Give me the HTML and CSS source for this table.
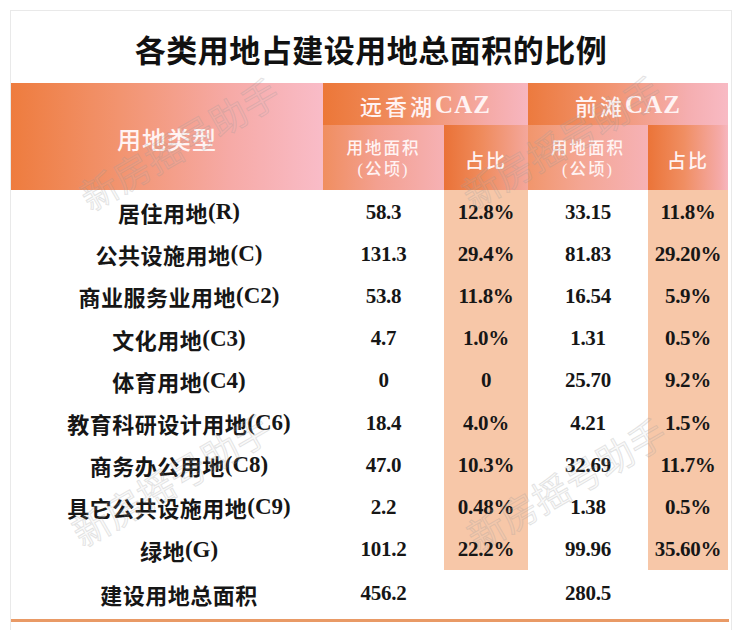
FILE: index.html
```html
<!DOCTYPE html>
<html lang="zh">
<head>
<meta charset="utf-8">
<title>各类用地占建设用地总面积的比例</title>
<link rel="stylesheet" href="styles.css">
</head>
<body>
<div class="sheet">
  <h1 class="title">各类用地占建设用地总面积的比例</h1>
  <div class="grid">
    <div class="hd hd-type">用地类型</div>
    <div class="hd hd-group g1">远香湖<span class="lat">CAZ</span></div>
    <div class="hd hd-group g2">前滩<span class="lat">CAZ</span></div>
    <div class="hd hd-area a1">用地面积<br>(公顷)</div>
    <div class="hd hd-pct p1">占比</div>
    <div class="hd hd-area a2">用地面积<br>(公顷)</div>
    <div class="hd hd-pct p2">占比</div>

    <div class="lab">居住用地<span class="lat">(R)</span></div><div class="num">58.3</div><div class="num pk">12.8%</div><div class="num">33.15</div><div class="num pk">11.8%</div>
    <div class="lab">公共设施用地<span class="lat">(C)</span></div><div class="num">131.3</div><div class="num pk">29.4%</div><div class="num">81.83</div><div class="num pk">29.20%</div>
    <div class="lab">商业服务业用地<span class="lat">(C2)</span></div><div class="num">53.8</div><div class="num pk">11.8%</div><div class="num">16.54</div><div class="num pk">5.9%</div>
    <div class="lab">文化用地<span class="lat">(C3)</span></div><div class="num">4.7</div><div class="num pk">1.0%</div><div class="num">1.31</div><div class="num pk">0.5%</div>
    <div class="lab">体育用地<span class="lat">(C4)</span></div><div class="num">0</div><div class="num pk">0</div><div class="num">25.70</div><div class="num pk">9.2%</div>
    <div class="lab">教育科研设计用地<span class="lat">(C6)</span></div><div class="num">18.4</div><div class="num pk">4.0%</div><div class="num">4.21</div><div class="num pk">1.5%</div>
    <div class="lab">商务办公用地<span class="lat">(C8)</span></div><div class="num">47.0</div><div class="num pk">10.3%</div><div class="num">32.69</div><div class="num pk">11.7%</div>
    <div class="lab">具它公共设施用地<span class="lat">(C9)</span></div><div class="num">2.2</div><div class="num pk">0.48%</div><div class="num">1.38</div><div class="num pk">0.5%</div>
    <div class="lab">绿地<span class="lat">(G)</span></div><div class="num">101.2</div><div class="num pk">22.2%</div><div class="num">99.96</div><div class="num pk">35.60%</div>
    <div class="lab total">建设用地总面积</div><div class="num total">456.2</div><div class="num total"></div><div class="num total">280.5</div><div class="num total"></div>
  </div>
  <div class="rule"></div>

  <span class="wm wm1">新房摇号助手</span>
  <span class="wm wm2">新房摇号助手</span>
  <span class="wm wm3">新房摇号助手</span>
  <span class="wm wm4">新房摇号助手</span>
</div>
</body>
</html>
```
FILE: styles.css
```css
html, body {
  margin: 0;
  padding: 0;
  background: #ffffff;
}

body {
  font-family: "Liberation Serif", "Noto Sans CJK SC", serif;
  color: #1a1a1a;
}

.sheet {
  position: relative;
  margin: 10px 0 0 10px;
  width: 720px;
  height: 640px;
  border-top: 1px solid #e9e9e9;
  border-left: 1px solid #e9e9e9;
  border-right: 1px solid #e9e9e9;
  overflow: hidden;
}

.title {
  margin: 0;
  height: 72px;
  display: flex;
  align-items: center;
  justify-content: center;
  font-family: "Noto Sans CJK SC", sans-serif;
  font-weight: 700;
  font-size: 31px;
  letter-spacing: 0.5px;
  color: #111;
  padding-top: 2px;
  box-sizing: border-box;
}

.grid {
  display: grid;
  grid-template-columns: 312px 121px 84px 120px 80px;
  grid-template-rows: 42px 65px repeat(9, 42.2px) 46px;
  width: 717px;
}

.hd {
  display: flex;
  align-items: center;
  justify-content: center;
  text-align: center;
  color: #fff3f3;
  font-family: "Liberation Serif", "Noto Sans CJK SC", serif;
  font-weight: 500;
}

.hd-type {
  grid-row: 1 / 3;
  grid-column: 1;
  font-size: 24px;
  letter-spacing: 1px;
  padding-top: 4px;
  background: linear-gradient(to right, #ee7c3e 0%, #f29470 35%, #f6aaa6 70%, #f9bcc8 100%);
}

.hd-group {
  font-size: 22px;
  letter-spacing: 3px;
  padding-top: 2px;
}

.hd-group .lat {
  font-size: 25px;
  font-weight: 700;
  letter-spacing: 1px;
}

.g1 {
  grid-column: 2 / 4;
  background: linear-gradient(to right, #ec7738 0%, #f08e62 40%, #f5aaa6 80%, #f7b6c0 100%);
}

.g2 {
  grid-column: 4 / 6;
  background: linear-gradient(to right, #ec7a3e 0%, #f19470 40%, #f5aeb0 80%, #f8bac4 100%);
}

.hd-area {
  font-size: 16.5px;
  line-height: 21px;
  letter-spacing: 2px;
  padding-top: 2px;
}

.hd-pct {
  font-size: 19px;
  letter-spacing: 2px;
  padding-top: 4px;
}

.a1 {
  background: linear-gradient(to right, #f08e60 0%, #f3a090 45%, #f6b1b4 100%);
}

.p1 {
  background: linear-gradient(to right, #ea7237 0%, #ef8b5c 45%, #f4a79c 100%);
}

.a2 {
  background: linear-gradient(to right, #f1966c 0%, #f4a694 45%, #f6b2b6 100%);
}

.p2 {
  background: linear-gradient(to right, #eb7438 0%, #f08e62 45%, #f5aaa8 90%, #f7b6be 100%);
}

.lab {
  display: flex;
  align-items: center;
  justify-content: center;
  padding-left: 24px;
  padding-top: 2px;
  font-family: "Liberation Serif", "Noto Sans CJK SC", serif;
  font-weight: 700;
  font-size: 22px;
  letter-spacing: 0.5px;
  color: #161616;
}

.lab .lat {
  font-size: 23px;
  letter-spacing: 0;
}

.num {
  display: flex;
  align-items: center;
  justify-content: center;
  padding-top: 2px;
  font-family: "Liberation Serif", serif;
  font-weight: 700;
  font-size: 21px;
  letter-spacing: -0.3px;
  color: #161616;
}

.pk {
  background: #f7c7a8;
}

.total {
  padding-top: 2px;
}

.rule {
  width: 718px;
  height: 3px;
  background: #e99a66;
  margin-top: 3px;
}

.wm {
  position: absolute;
  font-family: "Noto Sans CJK SC", sans-serif;
  font-size: 37px;
  font-weight: 400;
  white-space: nowrap;
  color: rgba(200, 200, 200, 0.10);
  -webkit-text-stroke: 1px rgba(150, 150, 150, 0.25);
  transform: translate(-50%, -50%) rotate(-30deg);
  pointer-events: none;
  letter-spacing: 0;
}

.wm1 { left: 168px; top: 132px; }
.wm2 { left: 550px; top: 130px; }
.wm3 { left: 160px; top: 468px; }
.wm4 { left: 555px; top: 472px; }
```
